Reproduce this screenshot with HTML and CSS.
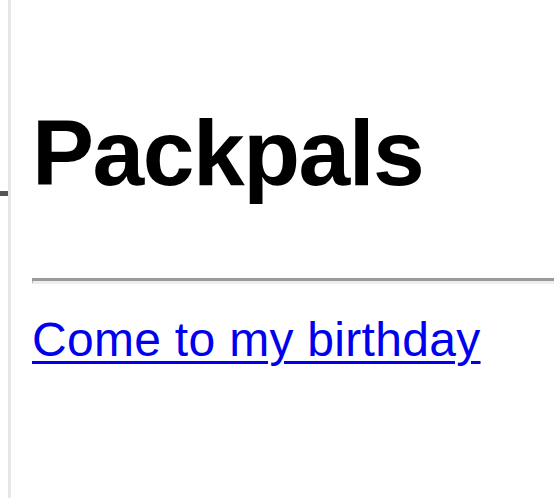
FILE: index.html
```html
<!DOCTYPE html>
<html>
<head>
<meta charset="utf-8">
<title>Packpals</title>
<link rel="stylesheet" href="styles.css">
</head>
<body>
<div class="frame">
  <div class="gutter"><div class="tick"></div></div>
  <main class="main">
    <h1 class="title">Packpals</h1>
    <hr class="rule">
    <p class="invite"><a href="#" class="invite-link">Come to my birthday</a></p>
  </main>
</div>
</body>
</html>
```

FILE: styles.css
```css
html, body {
  margin: 0;
  padding: 0;
  background: #ffffff;
}
body {
  font-family: "Liberation Sans", Arial, Helvetica, sans-serif;
  overflow: hidden;
}
.frame {
  display: flex;
  min-height: 498px;
}
.gutter {
  width: 8px;
  flex: 0 0 8px;
  padding-top: 191px;
  box-sizing: border-box;
}
.tick {
  height: 5px;
  background: #555555;
}
.main {
  flex: 1;
  border-left: 3px solid #e6e6e6;
  padding-left: 21px;
  padding-top: 101px;
  overflow: hidden;
}
.title {
  margin: 0;
  font-size: 93px;
  font-weight: bold;
  letter-spacing: -1.5px;
  line-height: 105px;
  color: #000000;
}
.rule {
  margin: 72px 0 0 0;
  height: 0;
  border: 0;
  border-top: 3px solid #9a9a9a;
  border-bottom: 3px solid #eeeeee;
  border-left: 1px solid #9a9a9a;
}
.invite {
  margin: 29px 0 0 0;
  font-size: 48px;
  line-height: 54px;
}
.invite-link {
  color: #0000ee;
  text-decoration: underline;
  text-decoration-thickness: 3px;
  text-underline-offset: 5px;
  letter-spacing: 0.3px;
}
```
